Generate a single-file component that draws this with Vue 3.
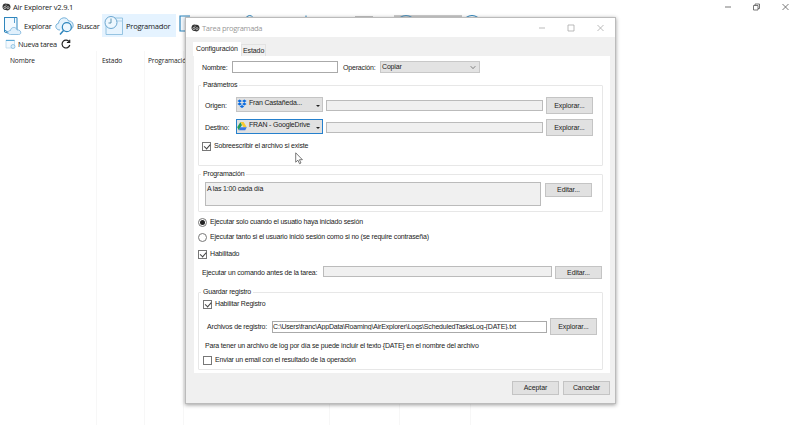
<script setup>
import { ref } from 'vue'

const nombre = ref('')
const comando = ref('')
const sesion = ref('iniciada')
const sobreescribir = ref(true)
const habilitado = ref(true)
const registro = ref(true)
const email = ref(false)
const archivo = ref('C:\\Users\\franc\\AppData\\Roaming\\AirExplorer\\Logs\\ScheduledTasksLog-{DATE}.txt')
</script>

<template>
  <div class="app">
    <header class="titlebar">
      <svg class="logo" viewBox="0 0 9 8"><path d="M.5 3.2C1 .8 3 .2 4.500 .8 7 .2 8.800 1.800 8.500 4.500 8 7 5.500 8 4 7 2 7.400 .2 5.500 .5 3.200Z" fill="#343434"/><circle cx="2.900" cy="4.500" r="1.100" fill="none" stroke="#ddd" stroke-width=".7"/><circle cx="6" cy="4.700" r="1.100" fill="none" stroke="#ddd" stroke-width=".7"/><path d="M3 2l2 .4" stroke="#bbb" stroke-width=".6"/></svg>
      <span class="app-name">Air Explorer v2.9.1</span>
      <svg class="win-controls" viewBox="0 0 64 10" fill="none" stroke="#555" stroke-width=".8"><path d="M0 5h6M28.500 3.500h4.500v4.500h-4.500zM30 3.500V2h4.500v4.500H33M57.500 2l6 6M63.500 2l-6 6"/></svg>
    </header>

    <nav class="toolbar">
      <button class="tool explorar">
        <svg viewBox="0 0 19 20" fill="none"><path d="M1 1.500h12.500v15H5L1 14z" fill="#f4faff" stroke="#2f86bd"/><path d="M1 1v15l5 1.500" stroke="#2f86bd"/><path d="M7 18.500c-3.500 0-3.500-4 0-4 .4-4 6-4 6.500-.5 4-.8 5.500 4.500 1.500 4.500z" fill="#e0f0fc" stroke="#79b2db" stroke-width=".8"/><path d="M11 2v5" stroke="#5aa2d2"/></svg>
        <span>Explorar</span>
      </button>
      <button class="tool buscar">
        <svg viewBox="0 0 20 20" fill="none"><path d="M5 14C0 14-.5 8 3.500 7.300 4 1 12 0 13.500 5c5-.5 6.500 6.500 2 8.500" fill="#e5f3fd" stroke="#68a9d5" stroke-width=".9"/><circle cx="11.800" cy="11.200" r="4.500" fill="#edf7fe" stroke="#2f86bd" stroke-width="1.200"/><path d="M8.500 14.500L5 18.500" stroke="#2f86bd" stroke-width="1.500"/></svg>
        <span>Buscar</span>
      </button>
      <button class="tool programador">
        <svg viewBox="0 0 20 20" fill="none"><path d="M2 9v9.500h16.500V2H10" fill="#e7f4fe" stroke="#82b7da" stroke-width=".8"/><path d="M10 5h8.500" stroke="#acd0e9"/><circle cx="7" cy="6.500" r="6" fill="#edf7fe" stroke="#5d9dca" stroke-width=".9"/><path d="M7 2.500v4.500H4.500" stroke="#407d9f" stroke-width=".8"/></svg>
        <span>Programador</span>
      </button>
      <svg class="hidden-tools" viewBox="0 0 320 20" fill="none"><path d="M11 2H1v15h11" fill="#f4faff" stroke="#2f86bd" stroke-width="1.200"/><path d="M67 3.500q4-4 7 0M127 3.500v-2M287 3.500q6-4 12 0" stroke="#2f86bd"/><path d="M176 3h18" stroke="#888"/><path d="M215 2h68" stroke="#ccc" stroke-width="2"/><path d="M221 3.500q6-4 12 0" stroke="#4c91bd"/></svg>
    </nav>

    <div class="subbar">
      <svg class="new-icon" viewBox="0 0 11 10" fill="none"><path d="M1 1h8.500v8H1z" fill="#f3f9fe" stroke="#b1d4ea" stroke-width=".7"/><path d="M1 1.500h8.500" stroke="#5baad8"/><circle cx="8" cy="7.500" r="2" fill="#dceffa" stroke="#78b5dc" stroke-width=".7"/></svg>
      <span>Nueva tarea</span>
      <svg class="refresh" viewBox="0 0 10 10" fill="none" stroke="#222" stroke-width="1.200"><path d="M8.300 3A3.900 3.900 0 1 0 8.800 6"/><path d="M8.700 .7v2.800H5.900"/></svg>
    </div>

    <main class="columns">
      <div>Nombre</div><div>Estado</div><div>Programación</div><div></div><div></div><div></div>
    </main>

    <section class="dialog">
      <header class="dlg-title">
        <svg class="logo" viewBox="0 0 9 8"><path d="M.5 3.200C1 .8 3 .2 4.500 .8 7 .2 8.800 1.800 8.500 4.500 8 7 5.500 8 4 7 2 7.400 .2 5.500 .5 3.200Z" fill="#343434"/><circle cx="2.900" cy="4.500" r="1.100" fill="none" stroke="#ddd" stroke-width=".7"/><circle cx="6" cy="4.700" r="1.100" fill="none" stroke="#ddd" stroke-width=".7"/><path d="M3 2l2 .4" stroke="#bbb" stroke-width=".6"/></svg>
        <span>Tarea programada</span>
        <svg class="dlg-controls" viewBox="0 0 66 10" fill="none" stroke="#aaa" stroke-width=".8"><path d="M0 5h6M29 2h6v6h-6zM58.500 2l6 6M64.500 2l-6 6"/></svg>
      </header>

      <div class="tabs">
        <span class="tab active">Configuración</span>
        <span class="tab">Estado</span>
      </div>

      <div class="panel">
        <div class="row name-row">
          <label class="l-nombre">Nombre:</label>
          <input v-model="nombre" class="field white name" />
          <label class="l-oper">Operación:</label>
          <div class="select"><span>Copiar</span><svg viewBox="0 0 6 5" fill="none" stroke="#666" stroke-width=".8"><path d="M.7 1.200L3 3.600 5.300 1.200"/></svg></div>
        </div>

        <fieldset class="params">
          <legend>Parámetros</legend>
          <div class="row path-row">
            <label>Origen:</label>
            <div class="combo">
              <svg viewBox="0 0 10 10" fill="#0c6ce0"><path d="M2.700 .5L5 2 2.700 3.500.4 2zM7.300 .5L9.600 2 7.300 3.500 5 2zM2.700 3.500L5 5 2.700 6.500.4 5zM7.300 3.500L9.600 5 7.300 6.500 5 5zM5 6L7.300 7.500 5 9.100 2.700 7.500z"/></svg>
              <span>Fran Castañeda...</span><i></i>
            </div>
            <div class="field path"></div>
            <button class="btn tall">Explorar...</button>
          </div>
          <div class="row path-row second">
            <label>Destino:</label>
            <div class="combo focus">
              <svg viewBox="0 0 10 10"><path d="M3.400 1L5 3.900 1.800 9.200.2 6.300z" fill="#249c58"/><path d="M3.400 1h3.200l3.200 5.300H6.500z" fill="#f7c931"/><path d="M3.200 6.300h6.600L8.200 9.200H1.800z" fill="#3978e8"/></svg>
              <span>FRAN - GoogleDrive</span><i></i>
            </div>
            <div class="field path"></div>
            <button class="btn tall">Explorar...</button>
          </div>
          <label class="check overwrite"><input v-model="sobreescribir" type="checkbox" /><span>Sobreescribir el archivo si existe</span></label>
        </fieldset>

        <fieldset class="schedule">
          <legend>Programación</legend>
          <div class="schedule-row">
            <div class="field summary">A las 1:00 cada día</div>
            <button class="btn">Editar...</button>
          </div>
        </fieldset>

        <label class="check run-one"><input v-model="sesion" type="radio" value="iniciada" /><span>Ejecutar solo cuando el usuatio haya iniciado sesión</span></label>
        <label class="check run-two"><input v-model="sesion" type="radio" value="siempre" /><span>Ejecutar tanto si el usuario inició sesión como si no (se require contraseña)</span></label>
        <label class="check enabled"><input v-model="habilitado" type="checkbox" /><span>Habilitado</span></label>

        <div class="row command-row">
          <label>Ejecutar un comando antes de la tarea:</label>
          <input v-model="comando" class="field" />
          <button class="btn">Editar...</button>
        </div>

        <fieldset class="log">
          <legend>Guardar registro</legend>
          <label class="check log-on"><input v-model="registro" type="checkbox" /><span>Habilitar Registro</span></label>
          <div class="row log-row">
            <label>Archivos de registro:</label>
            <input v-model="archivo" class="field white" />
            <button class="btn tall">Explorar...</button>
          </div>
          <p>Para tener un archivo de log por día se puede incluir el texto {DATE} en el nombre del archivo</p>
          <label class="check mail"><input v-model="email" type="checkbox" /><span>Enviar un email con el resultado de la operación</span></label>
        </fieldset>
      </div>

      <footer class="actions">
        <button class="btn">Aceptar</button>
        <button class="btn">Cancelar</button>
      </footer>
    </section>

    <svg class="cursor" viewBox="0 0 8 13"><path d="M.7 .8v9.400l2.200-2 1.600 3.500 1.500-.7-1.600-3.300h3z" fill="#fff" stroke="#444" stroke-width=".7"/></svg>
  </div>
</template>

<style>
body { margin: 0; background: #fff; overflow: hidden; }
</style>

<style scoped>
* { box-sizing: border-box; }
svg { display: block; flex: none; }
.app { position: relative; display: flex; flex-direction: column; width: 800px; height: 425px; overflow: hidden; background: #fff; color: #222; font: 7px/10px "Liberation Sans", Arial, sans-serif; letter-spacing: -.18px; white-space: nowrap; }
button, input { font: inherit; letter-spacing: inherit; color: inherit; margin: 0; padding: 0; border: 0; border-radius: 0; }
label { flex: none; }
.titlebar { display: flex; align-items: center; height: 14px; padding-left: 2px; font: 7.600px/12px "Open Sans", sans-serif; letter-spacing: -.22px; }
.logo { width: 9px; height: 8px; }
.app-name { margin-left: 2px; }
.win-controls { width: 64px; height: 10px; margin-left: auto; margin-right: 11px; }
.toolbar { display: flex; height: 23px; }
.tool { display: flex; align-items: center; flex: none; background: none; font: 7.600px/12px "Open Sans", sans-serif; letter-spacing: -.27px; text-align: left; }
.tool svg { width: 20px; height: 20px; }
.explorar { width: 55px; padding-left: 3px; }
.explorar span { margin-left: 1px; }
.buscar { width: 47px; }
.buscar span { margin-left: 2px; }
.programador { width: 74px; padding-left: 2px; background: #e5f3ff; }
.programador span { margin-left: 2px; }
.hidden-tools { width: 320px; height: 20px; margin-left: 3px; }
.subbar { display: flex; align-items: center; height: 14px; padding-left: 5px; font: 7.400px/12px "Open Sans", sans-serif; letter-spacing: -.28px; }
.new-icon { width: 11px; height: 10px; }
.subbar span { margin-left: 2px; width: 39px; }
.refresh { width: 10px; height: 10px; margin-left: 4px; }
.columns { display: grid; grid-template-columns: 97px 48px 39px 146px 70px 71px; flex: 1; font: 6.600px/20px "Open Sans", sans-serif; letter-spacing: -.1px; }
.columns div { border-right: 1px solid #f7f7f7; padding-left: 5px; min-width: 0; }
.columns div:first-child { padding-left: 10px; }
.columns div:nth-child(3) { padding-left: 3px; }

.dialog { position: absolute; left: 185px; top: 17px; width: 431px; height: 387px; border: 1px solid #bbb; background: #f0f0f0; box-shadow: 0 1px 4px #0006; display: flex; flex-direction: column; }
.dlg-title { display: flex; align-items: center; height: 19px; padding-left: 5px; background: #fff; color: #999; font: 7.500px/12px "Open Sans", sans-serif; letter-spacing: -.3px; flex: none; }
.dlg-title .logo { margin-right: 2px; }
.dlg-controls { width: 66px; height: 10px; margin-left: auto; margin-right: 10px; }
.tabs { display: flex; align-items: flex-end; height: 19px; padding-left: 7px; letter-spacing: -.1px; flex: none; }
.tab { height: 12px; width: 25px; padding-left: 1px; line-height: 11px; border: 1px solid #e2e2e2; border-bottom: 0; }
.tab.active { width: 48px; height: 14px; background: #fff; border: 0; padding-left: 3px; line-height: 13px; }
.panel { width: 416px; height: 317px; margin-left: 8px; padding-left: 4px; background: #fff; flex: none; }
.row { display: flex; }
.field { border: 1px solid #bbb; background: #f0f0f0; outline: 0; flex: none; }
.field.white { background: #fff; border-color: #aaa; }
.btn { width: 47px; height: 14px; border: 1px solid #c4c4c4; background: #e1e1e1; text-align: center; line-height: 12px; letter-spacing: -.1px; flex: none; }
.btn.tall { height: 17px; line-height: 15px; }
.name-row { padding: 5px 0 0 4px; height: 24px; }
.name-row label { line-height: 14px; }
.l-nombre { width: 30px; }
.l-oper { width: 37px; margin-left: 5px; }
.name { width: 106px; height: 12px; }
.select { display: flex; justify-content: space-between; align-items: center; width: 100px; height: 12px; padding: 0 3px 0 1px; border: 1px solid #c8c8c8; background: #e3e3e3; }
.select svg { width: 6px; height: 5px; }
fieldset { width: 405px; margin: 0; padding: 0; border: 1px solid #e7e7e7; min-width: 0; border-radius: 1px; }
legend { padding: 0 2px; margin-left: 2px; height: 10px; line-height: 10px; }
.params { height: 86px; }
.path-row { height: 17px; margin-top: 7px; padding-left: 6px; align-items: center; }
.path-row.second { margin-top: 5px; }
.path-row label { width: 31px; }
.combo { display: flex; align-self: flex-start; width: 87px; height: 15px; padding: 0 2px 0 0; border: 1px solid #c4c4c4; background: #e1e1e1; }
.combo.focus { border-color: #2580cd; }
.combo svg { width: 10px; height: 10px; margin-top: 1px; }
.combo span { margin-left: 2px; line-height: 10px; width: 67px; }
.combo i { width: 0; height: 0; margin: 7px 0 0 1px; border: 2px solid transparent; border-top-color: #222; border-bottom: 0; }
.path { width: 217px; height: 11px; margin: 0 3px; }
.check { display: flex; align-items: center; height: 10px; }
.check input { appearance: none; width: 9px; height: 9px; border: 1px solid #777; background: #fff; flex: none; display: grid; place-items: center; }
.check span { margin-left: 3px; }
.check input[type="checkbox"]:checked::before { content: ""; width: 5px; height: 2.500px; margin-top: -1px; border: solid #444; border-width: 0 0 .8px .8px; transform: rotate(-48deg); }
.check input[type="radio"] { border-radius: 50%; }
.check input[type="radio"]:checked::before { content: ""; width: 5px; height: 5px; border-radius: 50%; background: #222; }
.overwrite { margin: 5px 0 0 3px; }
.schedule { height: 43px; margin-top: 3px; }
.schedule-row { display: flex; padding: 3px 0 0 6px; }
.summary { width: 336px; height: 24px; padding-left: 1px; margin-right: 4px; line-height: 11px; }
.schedule-row .btn { margin-top: 1px; }
.run-one { margin-top: 5px; }
.run-two { margin-top: 5px; }
.enabled { margin-top: 7px; }
.command-row { padding: 7px 0 0 4px; height: 28px; }
.command-row label { width: 121px; line-height: 14px; }
.command-row .field { width: 229px; height: 11px; margin-right: 3px; }
.command-row .btn { height: 13px; line-height: 12px; }
.log { height: 83px; }
.log-on { margin: 2px 0 0 4px; }
.log-row { height: 17px; margin-top: 9px; padding-left: 8px; align-items: center; }
.log-row label { width: 65px; }
.log-row .field { width: 275px; height: 12px; margin-right: 3px; padding-left: 0; }
.log p { margin: 6px 0 0 6px; height: 10px; }
.mail { margin: 4px 0 0 4px; }
.actions { display: flex; justify-content: flex-end; gap: 4px; padding: 8px 5px 0 0; }
.cursor { position: absolute; left: 295px; top: 152px; width: 8px; height: 13px; }
</style>
